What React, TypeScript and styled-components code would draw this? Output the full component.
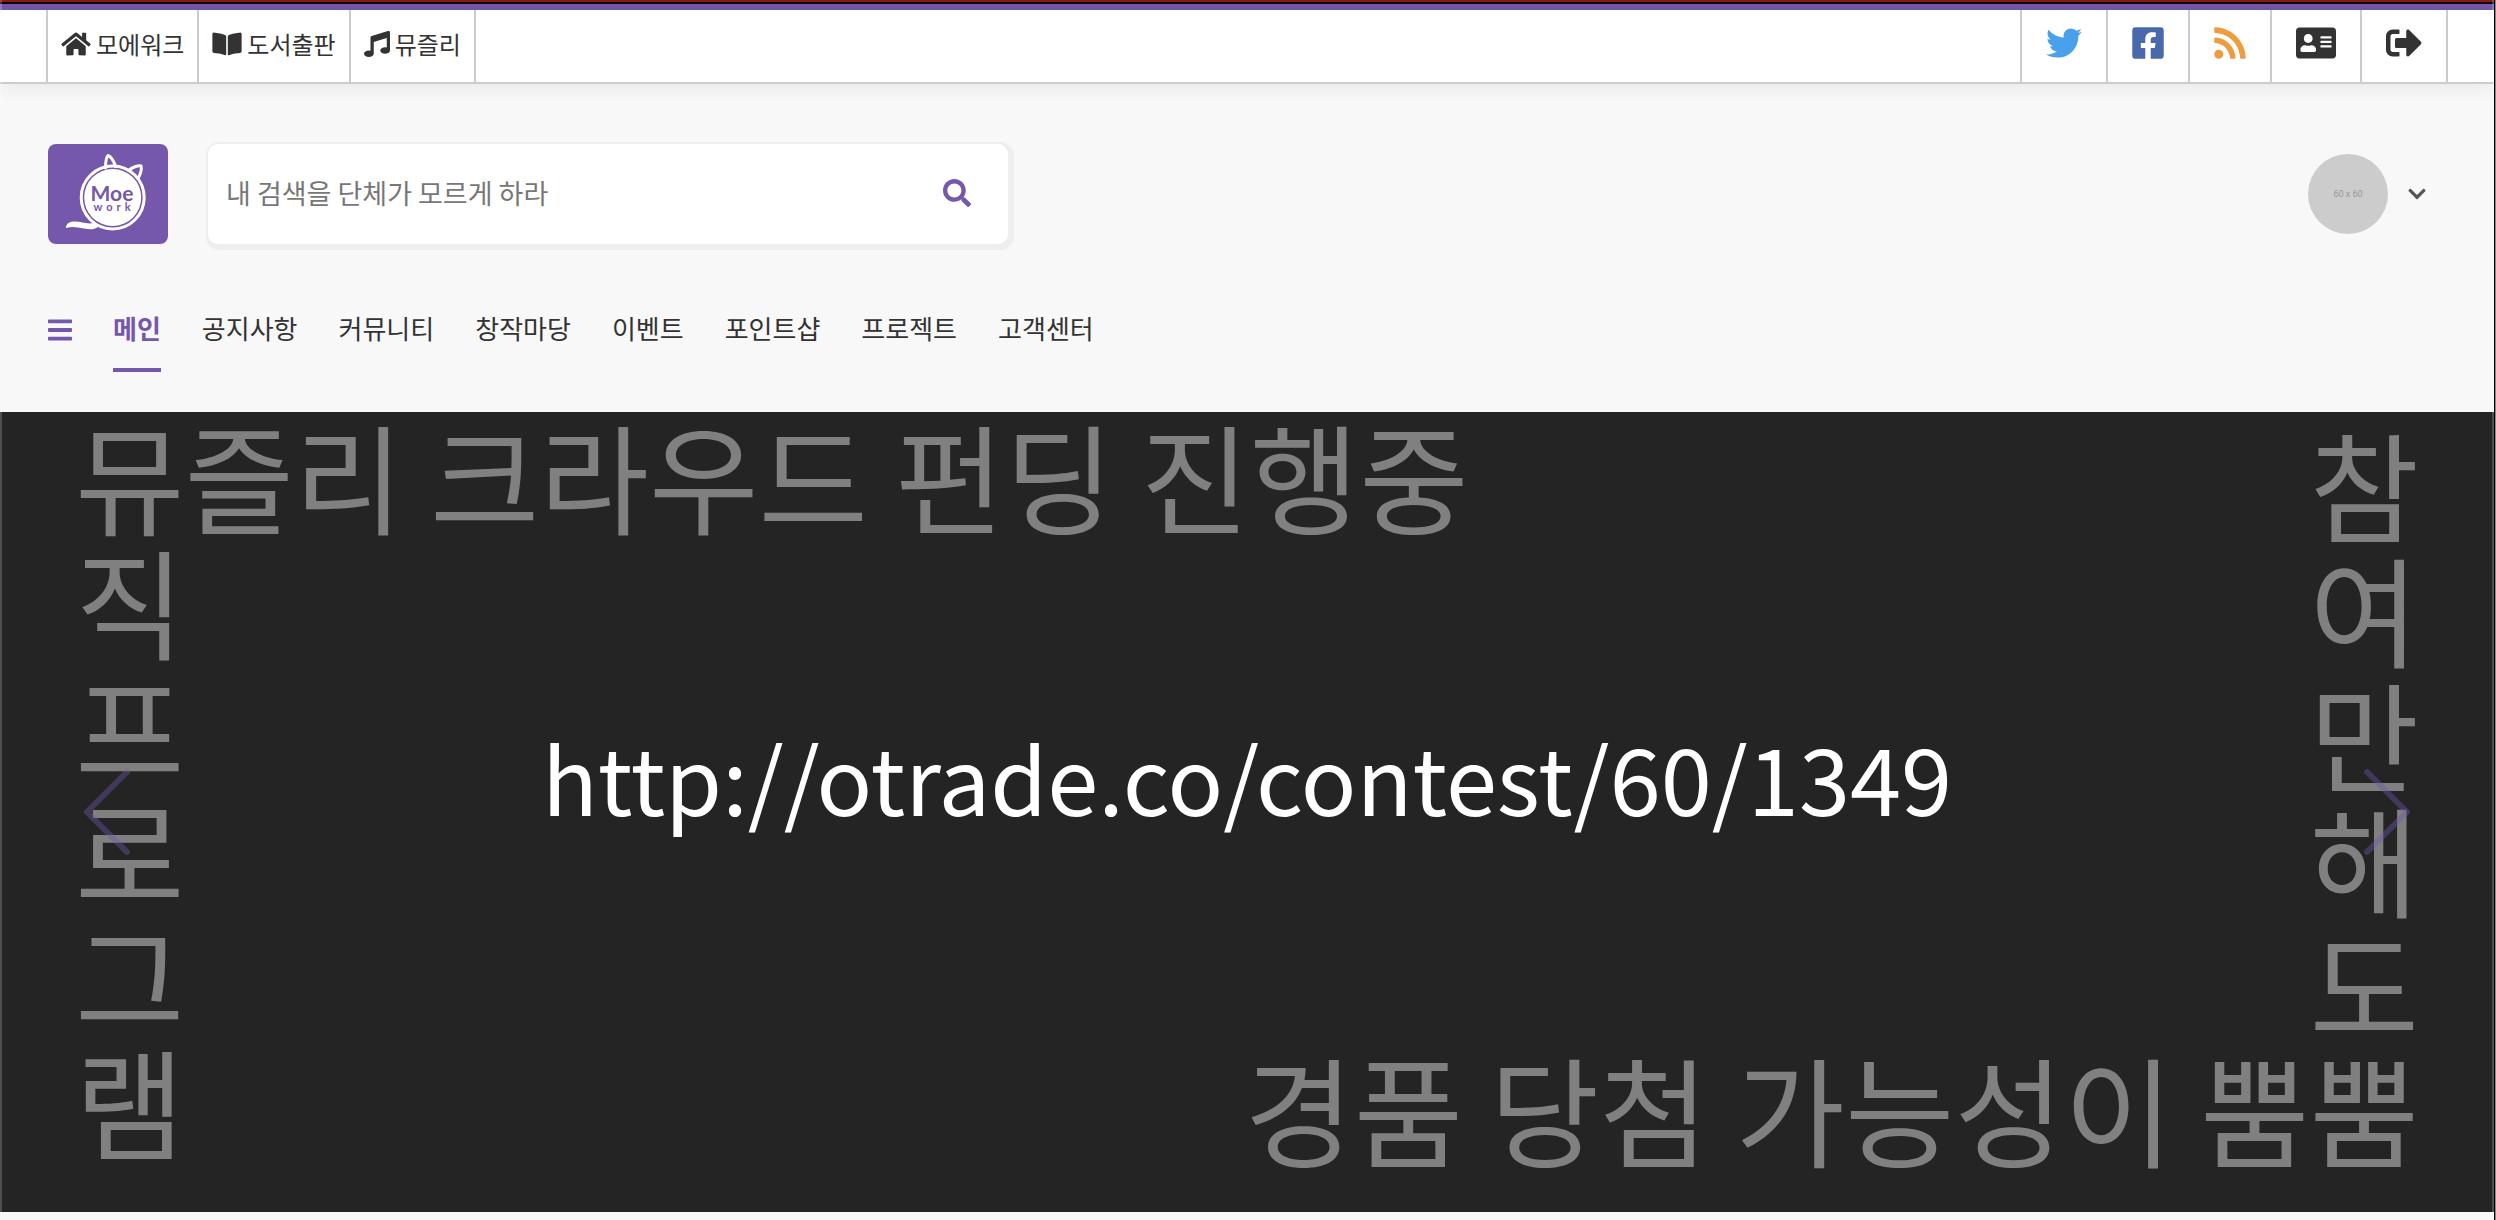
import React from 'react';
import styled, { createGlobalStyle } from 'styled-components';
import {
  FaHome,
  FaBookOpen,
  FaMusic,
  FaTwitter,
  FaFacebookSquare,
  FaRss,
  FaAddressCard,
  FaSignOutAlt,
  FaSearch,
  FaBars,
  FaChevronDown,
} from 'react-icons/fa';

const purple = '#7558ac';
const ink = '#333';
const line = '#ccc';

const GlobalStyle = createGlobalStyle`
  *, *::before, *::after { box-sizing: border-box; }
  body {
    margin: 0;
    background: #f8f8f8;
    color: ${ink};
    font-family: "Noto Sans CJK KR", "Noto Sans", sans-serif;
  }
  a { color: inherit; text-decoration: none; }
  button { border: 0; padding: 0; background: none; color: inherit; font: inherit; cursor: pointer; }
`;

const Desktop = styled.div`
  padding-right: 1px;
  background: #8a8a8a;
`;

const Window = styled.div`
  position: relative;
  min-height: 100vh;
  background: #f8f8f8;
  border-right: 1px solid #000;

  &::after {
    content: '';
    position: absolute;
    inset: 0;
    border: solid rgba(255, 255, 255, 0.2);
    border-width: 0 2px;
    pointer-events: none;
  }
`;

const Stripe = styled.div`
  height: 10px;
  border-top: 2px solid #8b1a10;
  background: linear-gradient(#0c0410 2px, ${purple} 2px);
`;

const TopBar = styled.div`
  display: flex;
  justify-content: space-between;
  height: 74px;
  padding: 0 46px;
  background: #fff;
  border-bottom: 2px solid ${line};
  box-shadow: 0 2px 20px rgba(0, 0, 0, 0.08);
`;

const LinkGroup = styled.nav`
  display: flex;
  border-left: 2px solid ${line};
`;

const SiteLink = styled.a`
  display: flex;
  align-items: center;
  gap: 5px;
  padding: 0 13px 5px;
  border-right: 2px solid ${line};
  font-size: 24px;
  line-height: 36px;
`;

const Icon = styled.span<{ $width: number; $height: number; $color?: string }>`
  display: flex;
  color: ${(p) => p.$color ?? 'inherit'};

  svg {
    width: ${(p) => p.$width}px;
    height: ${(p) => p.$height}px;
  }
`;

const SocialLink = styled.a`
  display: flex;
  align-items: center;
  padding: 0 24px 6px;
  border-right: 2px solid ${line};
`;

const Header = styled.header`
  padding: 60px 48px 40px;
`;

const HeaderRow = styled.div`
  display: flex;
  align-items: center;
`;

const LogoLink = styled.a`
  display: flex;
  margin-right: 40px;
  border-radius: 8px;
  background: ${purple};
`;

const SearchForm = styled.form`
  display: flex;
  align-items: center;
  flex: 0 1 800px;
  height: 100px;
  padding: 0 37px 2px 18px;
  border-radius: 10px;
  background: #fff;
  box-shadow: 2px 2px 0 4px #eee;
`;

const SearchInput = styled.input`
  flex: 1;
  min-width: 0;
  padding: 0;
  border: 0;
  outline: 0;
  background: none;
  color: ${ink};
  font: 27px/40px "Noto Sans CJK KR", sans-serif;

  &::placeholder { color: #777; opacity: 1; }
`;

const ProfileButton = styled.button`
  display: flex;
  align-items: center;
  gap: 20px;
  margin-left: auto;
  padding-right: 20px;
  color: #555;
`;

const Avatar = styled.span`
  display: grid;
  place-items: center;
  width: 80px;
  height: 80px;
  border-radius: 50%;
  background: ${line};
  color: #999;
  font: 9px/12px Roboto, sans-serif;
`;

const MainNav = styled.nav`
  display: flex;
  align-items: center;
  gap: 41px;
  margin-top: 44px;
`;

const NavLink = styled.a<{ $active?: boolean }>`
  height: 84px;
  border-bottom: 4px solid ${(p) => (p.$active ? purple : 'transparent')};
  color: ${(p) => (p.$active ? purple : ink)};
  font-size: 26px;
  font-weight: ${(p) => (p.$active ? 700 : 400)};
  line-height: 80px;
`;

const Banner = styled.section`
  position: relative;
  display: grid;
  padding: 0 75px 42px;
  background: #242424;
  color: #808080;
  font-size: 119px;
  line-height: 125px;
`;

const BannerText = styled.div<{ $end?: boolean }>`
  grid-area: 1 / 1;
  display: flex;
  flex-direction: column;
  align-items: ${(p) => (p.$end ? 'flex-end' : 'flex-start')};
  padding-top: ${(p) => (p.$end ? 8 : 0)}px;
  white-space: nowrap;
`;

const BannerLink = styled.a`
  grid-area: 1 / 1;
  place-self: center;
  padding-bottom: 32px;
  color: #fff;
  font-size: 92px;
`;

const Arrow = styled.button<{ $side: 'left' | 'right' }>`
  position: absolute;
  top: 50%;
  ${(p) => p.$side}: 84px;
  display: flex;
  transform: translateY(-50%);
  color: ${purple};
  opacity: 0.4;
`;

const siteLinks = [
  { label: '모에워크', width: 30, icon: <FaHome /> },
  { label: '도서출판', width: 30, icon: <FaBookOpen /> },
  { label: '뮤즐리', width: 26, icon: <FaMusic /> },
];

const socialLinks = [
  { label: 'Twitter', width: 36, color: '#4aa1eb', icon: <FaTwitter /> },
  { label: 'Facebook', width: 32, color: '#4a69ad', icon: <FaFacebookSquare /> },
  { label: 'RSS', width: 32, color: '#ee9c3e', icon: <FaRss /> },
  { label: '내 정보', width: 40, color: ink, icon: <FaAddressCard /> },
  { label: '로그아웃', width: 36, color: ink, icon: <FaSignOutAlt /> },
];

const menu = ['메인', '공지사항', '커뮤니티', '창작마당', '이벤트', '포인트샵', '프로젝트', '고객센터'];
const leftLines = ['뮤즐리 크라우드 펀딩 진행중', '직', '프', '로', '그', '램'];
const rightLines = ['참', '여', '만', '해', '도', '경품 당첨 가능성이 뿜뿜'];

function Logo() {
  return (
    <svg width="120" height="100" viewBox="0 0 120 100" role="img" aria-label="Moe work">
      <g fill="none" stroke="#fff" strokeWidth="3" strokeLinejoin="round" strokeLinecap="round">
        <path d="M57.500 24C57.500 18 58.500 13 60 11.500C62.500 12 66 17 67.500 22.500" />
        <path d="M80.500 26.500C84 23.500 90 21 93 22C94 25 92.500 30 90 34.500" />
        <circle cx="64.700" cy="53.500" r="31.500" />
      </g>
      <circle cx="64.700" cy="53.500" r="28.500" fill="#fff" />
      <path
        d="M18 84C18 79 22 77.500 27 77.500C34 77.500 38 80.500 46 79L50 83C46 86 41 85.500 36 84.500C29 83 24 82 18 84Z"
        fill="#fff"
      />
      <text x="64" y="57" textAnchor="middle" fontFamily="Lato, sans-serif" fontWeight="700" fontSize="21" fill={purple}>
        Moe
      </text>
      <text x="66" y="67" textAnchor="middle" fontFamily="Lato, sans-serif" fontWeight="700" fontSize="11" letterSpacing="4" fill={purple}>
        work
      </text>
    </svg>
  );
}

function Chevron({ points }: { points: string }) {
  return (
    <svg width="46" height="86" viewBox="0 0 46 86" fill="none" stroke="currentColor" strokeWidth="6" strokeLinecap="round" strokeLinejoin="round">
      <polyline points={points} />
    </svg>
  );
}

export default function App() {
  return (
    <Desktop>
      <GlobalStyle />
      <Window>
        <Stripe />
        <TopBar>
          <LinkGroup>
            {siteLinks.map((s) => (
              <SiteLink key={s.label} href="#">
                <Icon $width={s.width} $height={26}>{s.icon}</Icon>
                {s.label}
              </SiteLink>
            ))}
          </LinkGroup>
          <LinkGroup>
            {socialLinks.map((s) => (
              <SocialLink key={s.label} href="#" aria-label={s.label}>
                <Icon $width={s.width} $height={36} $color={s.color}>{s.icon}</Icon>
              </SocialLink>
            ))}
          </LinkGroup>
        </TopBar>

        <Header>
          <HeaderRow>
            <LogoLink href="#">
              <Logo />
            </LogoLink>
            <SearchForm role="search">
              <SearchInput type="search" aria-label="검색" placeholder="내 검색을 단체가 모르게 하라" />
              <button type="submit" aria-label="검색하기">
                <Icon $width={28} $height={28} $color={purple}>
                  <FaSearch />
                </Icon>
              </button>
            </SearchForm>
            <ProfileButton type="button" aria-label="프로필 메뉴">
              <Avatar>60 x 60</Avatar>
              <Icon $width={18} $height={20}>
                <FaChevronDown />
              </Icon>
            </ProfileButton>
          </HeaderRow>
          <MainNav>
            <button type="button" aria-label="전체 메뉴">
              <Icon $width={24} $height={28} $color={purple}>
                <FaBars />
              </Icon>
            </button>
            {menu.map((label, i) => (
              <NavLink key={label} href="#" $active={i === 0}>
                {label}
              </NavLink>
            ))}
          </MainNav>
        </Header>

        <Banner>
          <BannerText>
            {leftLines.map((t) => (
              <span key={t}>{t}</span>
            ))}
          </BannerText>
          <BannerText $end>
            {rightLines.map((t) => (
              <span key={t}>{t}</span>
            ))}
          </BannerText>
          <BannerLink href="#">http://otrade.co/contest/60/1349</BannerLink>
          <Arrow type="button" $side="left" aria-label="이전">
            <Chevron points="43,3 3,43 43,83" />
          </Arrow>
          <Arrow type="button" $side="right" aria-label="다음">
            <Chevron points="3,3 43,43 3,83" />
          </Arrow>
        </Banner>
      </Window>
    </Desktop>
  );
}
